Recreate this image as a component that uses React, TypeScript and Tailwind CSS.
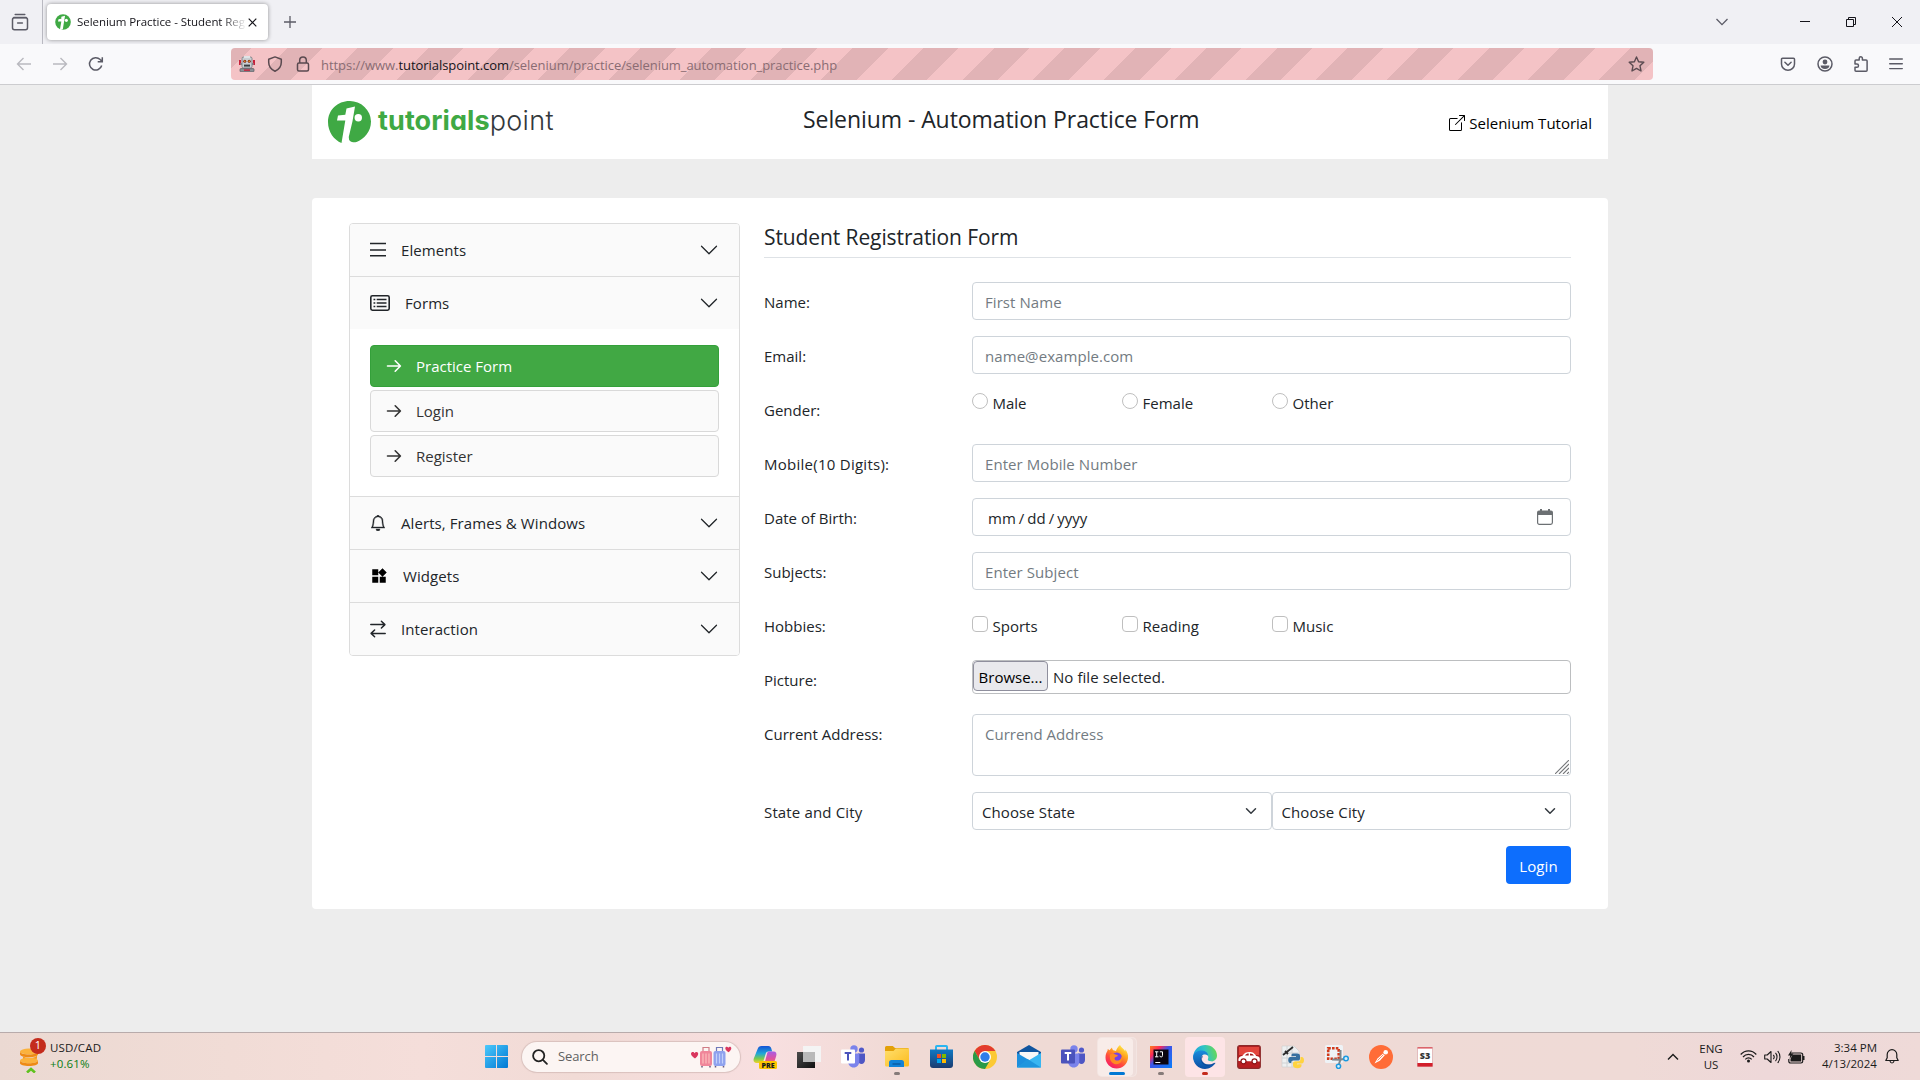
import React from 'react';
import { BsBell, BsBoxArrowUpRight, BsChevronDown } from 'react-icons/bs';
import { MdWidgets } from 'react-icons/md';

/* ---------- Browser chrome ---------- */

const TpFavicon = () => (
  <svg width="16" height="16" viewBox="0 0 43 43">
    <circle cx="21.5" cy="21.5" r="21" fill="#3fa944" />
    <path d="M17 7.500L27 5l-6 36-8 2.500L17 20H8l1.500-6 7.500-1z" fill="#fff" />
    <circle cx="30.500" cy="17" r="4.200" fill="#fff" />
  </svg>
);

const RobotIcon = () => (
  <svg width="16" height="16" viewBox="0 0 16 16">
    <rect x="0" y="4" width="2" height="5" fill="#c8203a" />
    <rect x="14" y="4" width="2" height="5" fill="#c8203a" />
    <rect x="1.5" y="7" width="13" height="2" fill="#8d9297" />
    <rect x="3" y="1" width="10" height="11" rx="1.5" fill="#c9ced2" stroke="#6d7378" strokeWidth=".8" />
    <rect x="5" y="0" width="6" height="2" fill="#dfe3e6" />
    <circle cx="5.8" cy="5.3" r="1.5" fill="#7a2318" />
    <circle cx="10.2" cy="5.3" r="1.5" fill="#7a2318" />
    <circle cx="5.8" cy="5.3" r=".8" fill="#f3a320" />
    <circle cx="10.2" cy="5.3" r=".8" fill="#f3a320" />
    <rect x="5" y="8.6" width="6" height="2" fill="#3a3d40" />
    <rect x="1" y="12.6" width="14" height="3.2" rx=".8" fill="#8b9096" stroke="#53585c" strokeWidth=".7" />
    <rect x="5" y="13.4" width="6" height="1.4" fill="#c8203a" />
  </svg>
);

function TabStrip() {
  return (
    <div className="flex h-11 items-center bg-[#f0f0f4] text-[#5b5b66]">
      <div className="flex h-11 w-[43px] items-center justify-center border-r border-[#b9b9c1] pr-[2px]">
        <svg width="18" height="18" viewBox="0 0 18 18" fill="none" stroke="currentColor" strokeWidth="1.5">
          <path d="M4.2 1.6h9.6M2.8 4.6h12.4" strokeLinecap="round" />
          <rect x="1.5" y="4.8" width="15" height="12" rx="2" />
          <path d="M6.6 9.9h4.8" strokeLinecap="round" />
        </svg>
      </div>
      <div className="ml-1 flex h-9 w-[221px] items-center rounded bg-white pl-2 shadow-[0_0_4px_rgba(0,0,0,0.4)]">
        <TpFavicon />
        <div className="ml-[6px] w-[168px] overflow-hidden text-[11.5px] tracking-[-0.06px] whitespace-nowrap text-[#15141a] [mask-image:linear-gradient(to_right,black_145px,transparent_170px)]">
          Selenium Practice - Student Registration Form
        </div>
        <svg className="ml-[3px]" width="9" height="9" viewBox="0 0 9 9" stroke="#15141a" strokeWidth="1.2">
          <path d="M.7.7l7.6 7.6M8.3.7L.7 8.3" />
        </svg>
      </div>
      <svg className="ml-[16px]" width="12" height="12" viewBox="0 0 12 12" stroke="currentColor" strokeWidth="1.3">
        <path d="M6 0v12M0 6h12" />
      </svg>
      <div className="flex-1" />
      <svg className="mr-[72px]" width="12" height="8" viewBox="0 0 12 8" fill="none" stroke="currentColor" strokeWidth="1.3">
        <path d="M.5 1L6 6.6 11.500 1" />
      </svg>
      <svg className="mr-[36px]" width="10" height="10" viewBox="0 0 10 10" stroke="#15141a">
        <path d="M0 4.500h10" />
      </svg>
      <svg className="mr-[36px]" width="10" height="10" viewBox="0 0 10 10" fill="none" stroke="#15141a">
        <path d="M.5 2.500h7v7h-7zM2.500 2.500v-2h7v7h-2" />
      </svg>
      <svg className="mr-[18px]" width="10" height="10" viewBox="0 0 10 10" stroke="#15141a">
        <path d="M0 0l10 10M10 0L0 10" />
      </svg>
    </div>
  );
}

function NavBar() {
  return (
    <div className="flex h-[41px] items-center border-b border-[#cccccf] bg-[#f9f9fb] text-[#5b5b66]">
      <svg className="ml-4 opacity-40" width="16" height="16" viewBox="0 0 16 16" fill="none" stroke="currentColor" strokeWidth="1.4">
        <path d="M7.500 2L1.500 8l6 6M1.500 8H15" />
      </svg>
      <svg className="ml-5 opacity-40" width="16" height="16" viewBox="0 0 16 16" fill="none" stroke="currentColor" strokeWidth="1.4">
        <path d="M8.500 2l6 6-6 6M14.500 8H1" />
      </svg>
      <svg className="ml-5" width="16" height="16" viewBox="0 0 16 16" fill="none" stroke="currentColor" strokeWidth="1.500">
        <path d="M13.700 9.500A6.200 6.200 0 1 1 12.200 3.600L14 5.400M14.300 1.200v4.600H9.700" />
      </svg>
      <div className="ml-[127px] flex h-8 w-[1422px] items-center rounded bg-[repeating-linear-gradient(135deg,#e1b3b6_0px,#e1b3b6_14.7px,#f4c3c6_14.7px,#f4c3c6_39.7px,#e1b3b6_39.7px,#e1b3b6_50px)] pl-2 text-[#5a4a50]">
        <RobotIcon />
        <svg className="ml-3" width="16" height="16" viewBox="0 0 16 16" fill="none" stroke="currentColor" strokeWidth="1.500" strokeLinejoin="round">
          <path d="M8 .9l6.300 2.300v3c0 4-2.300 7.200-6.300 9-4-1.800-6.300-5-6.300-9v-3z" />
        </svg>
        <svg className="ml-3" width="16" height="16" viewBox="0 0 16 16" fill="none" stroke="currentColor" strokeWidth="1.500">
          <rect x="2.500" y="7" width="11" height="8" rx="1.500" />
          <path d="M4.700 7V4.300a3.300 3.300 0 0 1 6.600 0V7" />
        </svg>
        <div className="ml-[10px] flex-1 pt-1 text-[13px] tracking-[-0.05px] whitespace-nowrap text-[#8a6c73]">
          https://www.<span className="text-[#15141a]">tutorialspoint.com</span>/selenium/practice/selenium_automation_practice.php
        </div>
        <svg className="mr-2" width="17" height="17" viewBox="0 0 17 17" fill="none" stroke="currentColor" strokeWidth="1.400" strokeLinejoin="round">
          <path d="M8.500 1l2.100 4.700 5.200.6-3.800 3.500 1 5.200-4.500-2.600L4 15l1-5.200L1.200 6.300l5.200-.6z" />
        </svg>
      </div>
      <svg className="ml-[127px]" width="16" height="16" viewBox="0 0 16 16" fill="none" stroke="currentColor" strokeWidth="1.500" strokeLinecap="round" strokeLinejoin="round">
        <path d="M2.500 2.200h11a1 1 0 0 1 1 1V8a6.500 6.200 0 0 1-13 0V3.200a1 1 0 0 1 1-1zM4.900 6.300L8 9.300l3.100-3" />
      </svg>
      <svg className="ml-[20.5px]" width="16" height="16" viewBox="0 0 16 16">
        <circle cx="8" cy="8" r="7" fill="none" stroke="currentColor" strokeWidth="1.500" />
        <circle cx="8" cy="6" r="2.400" fill="currentColor" />
        <path d="M3.600 9.600h8.800c0 2-1.800 3.400-4.400 3.400s-4.400-1.400-4.400-3.400z" fill="currentColor" />
      </svg>
      <svg className="ml-[20px]" width="16" height="16" viewBox="0 0 16 16" fill="none" stroke="currentColor" strokeWidth="1.500" strokeLinejoin="round">
        <path d="M6.200 4V2.400a1.600 1.600 0 0 1 3.200 0V4h3.700a1 1 0 0 1 1 1v9.200a1 1 0 0 1-1 1H3a1 1 0 0 1-1-1v-2.900h1.900a1.500 1.500 0 0 0 0-3.200H2V5a1 1 0 0 1 1-1z" />
      </svg>
      <svg className="ml-[20.5px]" width="14" height="12" viewBox="0 0 14 12" stroke="currentColor" strokeWidth="1.400" strokeLinecap="round">
        <path d="M.7 1h12.600M.7 5.800h12.600M.7 10.600h12.600" />
      </svg>
    </div>
  );
}

/* ---------- Page header ---------- */

function Header() {
  return (
    <header className="mx-auto grid h-[74px] w-[1296px] grid-cols-[475px_auto_1fr] bg-white px-4">
      <div className="flex items-start pt-4">
        <svg width="43" height="42" viewBox="0 0 43 42">
          <path d="M21.500 0A21.300 21 0 0 1 43 20.500C43 31 36 38 28.500 41c-4 1-8.500-.5-7.500-5l-7.500 6C6 39 0 31 0 21 0 9 9.500 0 21.500 0z" fill="#3fa944" />
          <path d="M18.500 7.500L27 5.600l-2.500 14.600L20.500 37l-.5 3.500-6.500 1.500L17.300 19.500H9l1-4.900 7.300-.8z" fill="#fff" />
          <circle cx="30.300" cy="16.800" r="3.700" fill="#fff" />
        </svg>
        <div className="mt-[3px] ml-[7px] font-['Inter'] text-[27px] leading-[34px] [font-feature-settings:'cv11']">
          <span className="font-bold tracking-[0.1px] text-[#3fa944]">tutorials</span>
          <span className="font-light tracking-[0.3px] text-[#33383c]">point</span>
        </div>
      </div>
      <h1 className="mt-[18px] text-[23px] leading-8 tracking-[-0.07px] text-[#212529]">
        Selenium - Automation Practice Form
      </h1>
      <a className="mt-[26px] flex h-6 items-center gap-1 justify-self-end text-[15px] text-black">
        <BsBoxArrowUpRight size={16} />
        Selenium Tutorial
      </a>
    </header>
  );
}

/* ---------- Sidebar ---------- */

const ListBars = () => (
  <svg width="16" height="16" viewBox="0 0 16 16" stroke="#212529" strokeWidth="1.600">
    <path d="M0 1.500h16M0 8h16M0 13.800h16" />
  </svg>
);

const FormIcon = () => (
  <svg width="20" height="16" viewBox="0 0 20 16" fill="none" stroke="#212529">
    <rect x=".8" y=".8" width="18.400" height="14.400" rx="1.600" strokeWidth="1.600" />
    <path d="M6.700 4.500h9.800M6.700 8h9.800M6.700 11.500h9.800" strokeWidth="1.500" />
    <path d="M3.500 4.500h1.800M3.500 8h1.800M3.500 11.500h1.800" strokeWidth="1.600" />
  </svg>
);

const SwapIcon = () => (
  <svg width="16" height="18" viewBox="0 0 16 18" fill="none" stroke="#212529" strokeWidth="1.500" strokeLinecap="round" strokeLinejoin="round">
    <path d="M.8 4.600h14M11.400 1.200l3.500 3.400-3.500 3.400M15.200 13.400H1.200M4.600 10L1.100 13.400l3.500 3.400" />
  </svg>
);

const LinkArrow = () => (
  <svg width="16" height="14" viewBox="0 0 16 14" fill="none" stroke="currentColor" strokeWidth="1.600" strokeLinecap="round" strokeLinejoin="round">
    <path d="M1.500 7h12.800M9.200 1.800L14.400 7l-5.200 5.200" />
  </svg>
);

function AccordionHeader({ icon, label }: { icon: React.ReactNode; label: string }) {
  return (
    <div className="box-content flex h-[52px] items-center gap-[15px] bg-[#fafafa] px-5">
      {icon}
      <span className="flex-1 tracking-[0.08px]">{label}</span>
      <BsChevronDown size={20} />
    </div>
  );
}

function SubLink({ label, active }: { label: string; active?: boolean }) {
  return (
    <div
      className={
        active
          ? 'flex h-[42px] items-center gap-[14px] rounded border border-[#34a03a] bg-[#41a844] pl-[15px] text-white'
          : 'flex h-[42px] items-center gap-[14px] rounded border border-[#d9d9d9] bg-[#fafafa] pl-[15px] text-[#333]'
      }
    >
      <LinkArrow />
      <span>{label}</span>
    </div>
  );
}

function Sidebar() {
  return (
    <nav className="w-[391px] divide-y divide-[#dcdcdc] self-start overflow-hidden rounded border border-[#dcdcdc]">
      <AccordionHeader icon={<ListBars />} label="Elements" />
      <div>
        <AccordionHeader icon={<FormIcon />} label="Forms" />
        <div className="flex h-[167px] flex-col gap-[3px] px-5 pt-4">
          <SubLink label="Practice Form" active />
          <SubLink label="Login" />
          <SubLink label="Register" />
        </div>
      </div>
      <AccordionHeader icon={<BsBell size={16} strokeWidth={0.4} />} label="Alerts, Frames & Windows" />
      <AccordionHeader icon={<MdWidgets size={18} color="#000" />} label="Widgets" />
      <AccordionHeader icon={<SwapIcon />} label="Interaction" />
    </nav>
  );
}

/* ---------- Form ---------- */

function Row({ label, children }: { label: React.ReactNode; children: React.ReactNode }) {
  return (
    <div className="grid min-h-[38px] grid-cols-[208px_599px] items-start">
      <label className="pt-2 leading-6">{label}</label>
      {children}
    </div>
  );
}

function TextInput({ placeholder }: { placeholder: string }) {
  return (
    <input
      placeholder={placeholder}
      className="h-[38px] rounded border border-[#ced4da] bg-white px-3 pt-[2px] tracking-[0.07px] placeholder:text-[#737b82] placeholder:opacity-100"
    />
  );
}

function Choice({ type, label }: { type: 'radio' | 'checkbox'; label: string }) {
  return (
    <label className="flex w-[150px] gap-[4.5px] leading-6">
      <input
        type={type}
        className={
          type === 'radio'
            ? 'h-4 w-4 appearance-none rounded-full border border-[#bfbfbf]'
            : 'h-4 w-4 appearance-none rounded border border-[#bfbfbf]'
        }
      />
      <span className="-mt-[2px]">{label}</span>
    </label>
  );
}

function Select({ label }: { label: string }) {
  return (
    <div className="relative h-[38px] flex-1">
      <select className="h-full w-full appearance-none rounded border border-[#ced4da] bg-white pt-[2px] pl-[9px] tracking-[0.1px]">
        <option>{label}</option>
      </select>
      <svg className="absolute top-[13px] right-[13px]" width="16" height="12" viewBox="0 0 16 16" fill="none" stroke="#343a40" strokeWidth="2" strokeLinecap="round" strokeLinejoin="round">
        <path d="M2 5l6 6 6-6" />
      </svg>
    </div>
  );
}

function RegistrationForm() {
  return (
    <section className="w-[807px]">
      <h2 className="h-[35px] border-b border-[#dee2e6] text-[21px] leading-[28px] tracking-[-0.1px]">
        Student Registration Form
      </h2>
      <form className="mt-6 flex flex-col gap-4">
        <Row label="Name:">
          <TextInput placeholder="First Name" />
        </Row>
        <Row label="Email:">
          <TextInput placeholder="name@example.com" />
        </Row>
        <Row label="Gender:">
          <div className="flex pt-[3px]">
            <Choice type="radio" label="Male" />
            <Choice type="radio" label="Female" />
            <Choice type="radio" label="Other" />
          </div>
        </Row>
        <Row label={<span className="tracking-[0.26px]">Mobile(10 Digits):</span>}>
          <TextInput placeholder="Enter Mobile Number" />
        </Row>
        <Row label="Date of Birth:">
          <div className="flex h-[38px] items-center rounded border border-[#ced4da] pr-[17px] pl-[15px]">
            <div className="flex flex-1 gap-[3px] pt-[2px]">
              <span>mm</span>
              <span>/</span>
              <span>dd</span>
              <span>/</span>
              <span>yyyy</span>
            </div>
            <svg width="16" height="16" viewBox="0 0 16 16" fill="none">
              <path d="M3 0h2v1.500h6V0h2v1.500h1a2 2 0 0 1 2 2V6H0V3.500a2 2 0 0 1 2-2h1z" fill="#6c7073" />
              <path d="M.6 5v8.600a1.800 1.800 0 0 0 1.800 1.800h11.200a1.800 1.800 0 0 0 1.800-1.800V5" stroke="#6c7073" strokeWidth="1.200" />
            </svg>
          </div>
        </Row>
        <Row label="Subjects:">
          <TextInput placeholder="Enter Subject" />
        </Row>
        <Row label="Hobbies:">
          <div className="flex pt-[10px]">
            <Choice type="checkbox" label="Sports" />
            <Choice type="checkbox" label="Reading" />
            <Choice type="checkbox" label="Music" />
          </div>
        </Row>
        <Row label="Picture:">
          <div className="flex h-[34px] rounded border border-[#bcbec0]">
            <button type="button" className="h-[30px] w-[75px] rounded border border-[#8f8f9d] bg-[#e9e9ed] pt-[2px] text-black">
              Browse...
            </button>
            <span className="ml-[5px] pt-[5px] tracking-[0.06px]">No file selected.</span>
          </div>
        </Row>
        <Row label="Current Address:">
          <div className="relative h-[62px]">
            <textarea
              placeholder="Currend Address"
              className="block h-[62px] w-full resize-none rounded border border-[#ced4da] px-3 pt-[7px] leading-[24px] placeholder:text-[#737b82] placeholder:opacity-100"
            />
            <svg className="absolute right-[2px] bottom-[2px]" width="14" height="14" viewBox="0 0 14 14" stroke="#75777a" strokeWidth="1.100">
              <path d="M0 14L14 0M4 14L14 4M8 14l6-6M12 14l2-2" />
            </svg>
          </div>
        </Row>
        <Row label={<span className="tracking-[0.15px]">State and City</span>}>
          <div className="flex">
            <Select label="Choose State" />
            <Select label="Choose City" />
          </div>
        </Row>
        <button type="button" className="h-[38px] w-[65px] self-end rounded bg-[#0d6efd] pt-[2px] tracking-[0.1px] text-white">
          Login
        </button>
      </form>
    </section>
  );
}

/* ---------- Taskbar icons ---------- */

const StartIcon = () => (
  <svg width="23" height="23" viewBox="0 0 23 23">
    <defs>
      <linearGradient id="win" gradientUnits="userSpaceOnUse" x1="0" y1="0" x2="23" y2="23">
        <stop offset="0" stopColor="#4cc9fb" />
        <stop offset="1" stopColor="#0078d4" />
      </linearGradient>
    </defs>
    <path d="M0 1a1 1 0 0 1 1-1h10v11H0zM12 0h10a1 1 0 0 1 1 1v10H12zM0 12h11v11H1a1 1 0 0 1-1-1zM12 12h11v10a1 1 0 0 1-1 1H12z" fill="url(#win)" />
  </svg>
);

const SuitcasesIcon = () => (
  <svg width="41" height="22" viewBox="0 0 41 22">
    <path d="M4 12.500C1.500 10.800 0 9.400 0 7.800c0-2.200 2.800-2.600 3.600-.6.900-2 3.900-1.600 3.600.8C7 9.800 5.500 11.400 4 12.500z" fill="#d9365e" />
    <path d="M37.500 6.200C35.500 5 34.300 3.700 34.300 2.300c0-1.900 2.300-2 3-.5.700-1.500 3.200-1.300 3 .6-.1 1.400-1.500 2.900-2.800 3.800z" fill="#d9365e" />
    <path d="M12 6V1.500h6V6" fill="none" stroke="#cf7c86" strokeWidth="1.200" />
    <path d="M25.500 6V1.500h6V6" fill="none" stroke="#6f78b8" strokeWidth="1.200" />
    <rect x="9" y="5" width="12" height="15" rx="2" fill="#f0869a" />
    <rect x="22.500" y="5" width="12" height="15" rx="2" fill="#8fa2ee" />
    <path d="M12 7.500v10M15 7.500v10M18 7.500v10" stroke="#fcbfbd" strokeWidth="1.200" />
    <path d="M25.500 7.500v10M28.500 7.500v10M31.500 7.500v10" stroke="#c3d0fb" strokeWidth="1.200" />
    <path d="M11 20v1.500M19 20v1.500M24.500 20v1.500M32.500 20v1.500" stroke="#6b5c7c" strokeWidth="1.500" />
  </svg>
);

const CopilotIcon = () => (
  <svg width="24" height="24" viewBox="0 0 24 24">
    <defs>
      <linearGradient id="cpA" x1="0" y1="0" x2="0" y2="1">
        <stop offset="0" stopColor="#1553d6" />
        <stop offset=".45" stopColor="#21a7d8" />
        <stop offset=".75" stopColor="#7ccb4c" />
        <stop offset="1" stopColor="#f1d22c" />
      </linearGradient>
      <linearGradient id="cpB" x1="0" y1="0" x2="0" y2="1">
        <stop offset="0" stopColor="#a85be6" />
        <stop offset=".5" stopColor="#e0529c" />
        <stop offset="1" stopColor="#f78b45" />
      </linearGradient>
    </defs>
    <path d="M8.500 1h6.800c1.700 0 2.600 1.200 3 2.500l.9 3h-3.600c-1.600 0-2.400.7-2.900 2.200l-2.200 7C10 17.500 9 18 7.600 18H3.500C1 18 0 16 .8 13.500l3.700-9.300C5.300 2 6.500 1 8.500 1z" fill="url(#cpA)" />
    <path d="M15.600 6.500h4.900c2.600 0 3.500 2 2.700 4.500L21 18c-.8 2-2 3-4 3H9c1.300 0 2-1 2.500-2.500L14 9c.4-1.600.7-2.500 1.600-2.500z" fill="url(#cpB)" />
    <rect x="6" y="16" width="18" height="8" rx="1.500" fill="#fdc500" />
    <text x="15" y="22.600" fontSize="7" fontWeight="800" textAnchor="middle" fill="#1b1b1b">PRE</text>
  </svg>
);

const TaskViewIcon = () => (
  <svg width="24" height="22" viewBox="0 0 24 22">
    <defs>
      <linearGradient id="tvB" x1="0" y1="0" x2="1" y2="1">
        <stop offset="0" stopColor="#4b4b4b" />
        <stop offset="1" stopColor="#111" />
      </linearGradient>
    </defs>
    <rect x="0" y="6" width="18" height="16" fill="url(#tvB)" />
    <rect x="6" y="0" width="18" height="16" fill="#f4f4f4" />
    <rect x="6" y="6" width="12" height="10" fill="#b9b9b9" />
  </svg>
);

const TeamsIcon = ({ light }: { light?: boolean }) => (
  <svg width="24" height="23" viewBox="0 0 24 23">
    <circle cx="20.500" cy="5" r="2.600" fill="#5059c9" />
    <circle cx="13" cy="4" r="3.700" fill="#7b83eb" />
    <path d="M17 8.500h7V15c0 2.300-1.500 4-3.500 4S17 17.500 17 15z" fill="#4e56c4" />
    <path d="M7 8.500h11.300V16c0 4-2.300 6.500-5.600 6.500S7 20 7 16z" fill="#7b83eb" />
    <rect x="0" y="4.500" width="14" height="14" rx="1" fill={light ? '#ffffff' : '#4b53bc'} />
    <path d="M3.700 8h6.600M7 8v7.500" stroke={light ? '#4b53bc' : '#ffffff'} strokeWidth="2" />
  </svg>
);

const ExplorerIcon = () => (
  <svg width="24" height="21" viewBox="0 0 24 21">
    <defs>
      <linearGradient id="fe" x1="0" y1="0" x2="1" y2="1">
        <stop offset="0" stopColor="#ffdf6e" />
        <stop offset="1" stopColor="#fcbb1c" />
      </linearGradient>
    </defs>
    <path d="M0 1.500A1.500 1.500 0 0 1 1.500 0h6.300L10 2h12.500A1.500 1.500 0 0 1 24 3.500V10H0z" fill="#e3a008" />
    <path d="M0 5h8.500l2.300-2.500H24V19a1.500 1.500 0 0 1-1.500 1.500h-21A1.500 1.500 0 0 1 0 19z" fill="url(#fe)" />
    <path d="M4 21v-4.500A2.500 2.500 0 0 1 6.500 14h10a2.500 2.500 0 0 1 2.500 2.500V21z" fill="#1283d8" />
    <path d="M7.500 18h8" stroke="#0b5da5" strokeWidth="1.500" />
  </svg>
);

const StoreIcon = () => (
  <svg width="23" height="23" viewBox="0 0 23 23">
    <defs>
      <linearGradient id="st" x1="0" y1="0" x2="0" y2="1">
        <stop offset="0" stopColor="#1079c4" />
        <stop offset="1" stopColor="#1b3b6f" />
      </linearGradient>
    </defs>
    <path d="M6 6V1.800A.8.800 0 0 1 6.800 1h9.400a.8.800 0 0 1 .8.800V6" fill="none" stroke="#2bb5f0" strokeWidth="2" />
    <path d="M0 4.500h23V20a3 3 0 0 1-3 3H3a3 3 0 0 1-3-3z" fill="url(#st)" />
    <rect x="7" y="9" width="4" height="4" fill="#f25022" />
    <rect x="12" y="9" width="4" height="4" fill="#7fba00" />
    <rect x="7" y="14" width="4" height="4" fill="#00a4ef" />
    <rect x="12" y="14" width="4" height="4" fill="#ffb900" />
  </svg>
);

const ChromeIcon = () => (
  <svg width="24" height="24" viewBox="0 0 24 24">
    <circle cx="12" cy="12" r="12" fill="#fcc934" />
    <path d="M12 6h10.400A12 12 0 0 0 1.600 6L6.800 15z" fill="#e33b2e" />
    <path d="M1.600 6A12 12 0 0 0 12 24l5.200-9L12 18l-5.200-3z" fill="#2a9a48" />
    <circle cx="12" cy="12" r="6" fill="#fff" />
    <circle cx="12" cy="12" r="4.700" fill="#2f7de9" />
  </svg>
);

const MailIcon = () => (
  <svg width="24" height="23" viewBox="0 0 24 23">
    <path d="M12 0l12 7v5H0V7z" fill="#10559f" />
    <path d="M2.500 7h19v6L12 19l-9.500-6z" fill="#f7f7f7" />
    <path d="M0 8l12 7L0 22.500z" fill="#1c8fdd" />
    <path d="M24 8v14.500H0z" fill="#38b6f2" />
    <path d="M0 22.500L10.500 14 24 22.500z" fill="#1e96de" />
  </svg>
);

const FirefoxIcon = () => (
  <svg width="24" height="24" viewBox="0 0 24 24">
    <defs>
      <linearGradient id="ff" x1=".8" y1="0" x2=".2" y2="1">
        <stop offset="0" stopColor="#fff24a" />
        <stop offset=".35" stopColor="#ffa11f" />
        <stop offset=".65" stopColor="#ff4a3d" />
        <stop offset="1" stopColor="#f4156e" />
      </linearGradient>
    </defs>
    <path d="M15 0c1 2.500 4.200 4 5.300 6.500.1-.9 0-1.700-.2-2.300C22 6.500 23.500 9.500 23 13c-.6 6-5.300 10.500-11.300 10.500C5.300 23.500.5 18.500.5 12.500c0-3 .8-5 2-6.800L2.800 4l1.700 1.300C5.800 3.500 6.500 3 7 2.500c0 1 .4 2 1.200 2.700L11 6c.8-2.300 2-4.600 4-6z" fill="url(#ff)" />
    <circle cx="11.800" cy="12.800" r="5.200" fill="#7542e5" />
    <path d="M5 9.500c2-1.300 4-.6 5.500 0 1 .5 2.500.5 2.300 1.300-.4 1.200-2.600 1-3.200 2.200-.5 1.800 1.600 3 3.700 2.500 2-.4 3.200-2 3-4.500 2.500 4-1 8.500-5.300 8.200C7 19 4 15 5 9.500z" fill="#ff8a22" />
  </svg>
);

const IntellijIcon = () => (
  <svg width="22" height="22" viewBox="0 0 22 22">
    <defs>
      <linearGradient id="ij" x1="0" y1="0" x2="1" y2="1">
        <stop offset="0" stopColor="#fc801d" />
        <stop offset=".25" stopColor="#fe2857" />
        <stop offset=".45" stopColor="#3d55e8" />
        <stop offset="1" stopColor="#087cfa" />
      </linearGradient>
    </defs>
    <rect width="22" height="22" fill="url(#ij)" />
    <rect x="3.500" y="3.500" width="15" height="15" fill="#0b0510" />
    <path d="M5 5.800h3.400M6.700 5.800v5M5 10.800h3.400M9.800 5.800h2.700v3.700a1.300 1.300 0 0 1-2.700.2M5.300 16.500h5" stroke="#fff" strokeWidth="1" fill="none" />
  </svg>
);

const EdgeIcon = () => (
  <svg width="24" height="24" viewBox="0 0 24 24">
    <defs>
      <linearGradient id="egA" x1="0" y1=".5" x2="1" y2=".3">
        <stop offset="0" stopColor="#1f9fe0" />
        <stop offset=".5" stopColor="#31c4c5" />
        <stop offset="1" stopColor="#6bd94e" />
      </linearGradient>
      <linearGradient id="egB" x1="0" y1="0" x2="0" y2="1">
        <stop offset="0" stopColor="#1b8bdc" />
        <stop offset="1" stopColor="#0c4da2" />
      </linearGradient>
    </defs>
    <path d="M.2 11C1 4.500 6 0 12.200 0 19 0 24 5 24 10.500c0 3.500-2.500 6-6 6-2.600 0-4-1-3.300-2.300 1.500-2 .4-5-3.500-5C6 9.200 2 11 .2 15z" fill="url(#egA)" />
    <path d="M.2 11C1.200 7.500 5 5.500 9 5.600c4 .2 6 3 6 5-4-3.500-8 .2-6.500 4.500 1.500 4.200 7.500 6 13 2.900.8-.4 1 .1.700.6C20 21.500 16.500 24 12 24 5 24-.5 18 .2 11z" fill="url(#egB)" />
    <path d="M9.500 11c-1.400 1.700-1.600 4-.6 5.700 2 4 7.600 4.700 12.600 1.500" fill="none" stroke="#0a3f8c" strokeWidth="1.200" opacity=".6" />
    <path d="M10.800 11.500c1-1.300 3.200-1.300 4 .3.600 1.300-.6 2.200-.1 3.200.7 1.200 3 1.500 4.800 1.300-3.500 1.900-7.300 1.200-8.500-1-.7-1.300-.8-2.800-.2-3.800z" fill="#fde4e8" />
  </svg>
);

const CarIcon = () => (
  <svg width="24" height="24" viewBox="0 0 24 24">
    <rect x=".7" y=".7" width="22.600" height="22.600" rx="2" fill="#b81d20" stroke="#8c2a2a" strokeWidth="1.200" />
    <rect x="2" y="2" width="20" height="8" fill="#e2453d" />
    <path d="M1.500 16c-.5-3 .8-4.500 4-5.200C7.500 8 9 7 12.500 7c3.700 0 5 1.500 6.700 4 3.500.3 4 2 3.500 5.500z" fill="#fff" />
    <path d="M8 10.600c1-1.500 2-2 3.700-2v2zM13 8.600c2 0 3 .7 4 2h-4z" fill="#a01a1d" />
    <circle cx="6.500" cy="16.300" r="2.500" fill="#fff" stroke="#8c1518" strokeWidth="1.200" />
    <circle cx="17.500" cy="16.300" r="2.500" fill="#fff" stroke="#8c1518" strokeWidth="1.200" />
  </svg>
);

const PythonIcon = () => (
  <svg width="24" height="24" viewBox="0 0 24 24">
    <path d="M1 1h12l5 5v16H1z" fill="#eef0f1" stroke="#c9cccd" strokeWidth=".6" />
    <path d="M1 8h16M1 13h16M1 18h16M6 1v21M11 1v21" stroke="#cfd2d4" />
    <path d="M2 10L12 2M4 6l3 3" stroke="#2b2b2b" strokeWidth="1.800" />
    <path d="M12.500 8.500h3.500c2 0 3 .8 3 2.600v2.400c0 1.500-1 2-2.500 2h-4c-1.500 0-2.300.8-2.300 2.500h-1c-1.500 0-2-1.500-2-3s.6-3 2.200-3H15v-.8h-4.500v-1c0-1.200.7-1.700 2-1.700z" fill="#356f9f" />
    <path d="M19.500 12h1.300c1.500 0 2.200 1.500 2.200 3.200S22.300 18.500 20.800 18.500H16v.7h4.500v1.300c0 2-1.500 2.700-4 2.700S12 22.500 12 20.500v-2c0-1.500 1-2.200 2.400-2.200h3c1.400 0 2.100-.8 2.100-2.300z" fill="#ffd340" />
  </svg>
);

const SnipIcon = () => (
  <svg width="24" height="24" viewBox="0 0 24 24">
    <rect width="18" height="18" rx="1.500" fill="#eef3f7" />
    <rect x="3.200" y="3.200" width="10.500" height="10.500" fill="none" stroke="#d2391a" strokeWidth="2.600" strokeDasharray="2.600 1.200" />
    <path d="M15.500 5v9l-1.500 5M7 14.500l8.500.3 5-1.300" stroke="#7f868c" strokeWidth="2" fill="none" />
    <circle cx="21" cy="13.500" r="2.300" fill="#d8effb" stroke="#1b9ae0" strokeWidth="1.500" />
    <circle cx="13.500" cy="21.300" r="2.100" fill="#d8effb" stroke="#1b9ae0" strokeWidth="1.500" />
  </svg>
);

const PostmanIcon = () => (
  <svg width="24" height="24" viewBox="0 0 24 24">
    <circle cx="12" cy="12" r="12" fill="#ff6c37" />
    <path d="M5.500 18.500l3-5 5.500-5 1.800 1.800-5 5.500z" fill="#fff" />
    <circle cx="16.700" cy="7.300" r="2.300" fill="#fff" />
    <path d="M8.500 15.500l6-6" stroke="#ff6c37" strokeWidth=".8" />
  </svg>
);

const S3Icon = () => (
  <svg width="16" height="20" viewBox="0 0 16 20">
    <rect x=".4" y=".4" width="15.200" height="19.200" rx="1" fill="#fff" stroke="#d9a7a9" strokeWidth=".8" />
    <rect x=".5" y=".3" width="15" height="1.200" fill="#d8404a" />
    <rect x=".4" y="16" width="15.200" height="3.600" fill="#d21f2b" />
    <text x="8" y="11.700" fontSize="9" fontWeight="800" textAnchor="middle" fill="#333">S3</text>
  </svg>
);

/* ---------- Taskbar ---------- */

function AppCell({ children, mark }: { children: React.ReactNode; mark?: string }) {
  return (
    <div className="relative flex h-full w-11 items-center justify-center">
      {children}
      {mark && <span className={`absolute bottom-[5px] h-[3px] rounded-full ${mark}`} />}
    </div>
  );
}

function Taskbar() {
  return (
    <footer className="flex h-12 items-center border-t border-[#b8abab] bg-[linear-gradient(90deg,#ebd9d2_0%,#f1dcd6_12%,#f5deda_22%,#f1dbd6_30%,#f8dfe0_40%,#f0dad5_47%,#efdad5_55%,#efdad6_85%,#eed8d9_92%,#efdad8_100%)] text-[11.5px] text-[#1b1b1b]">
      <div className="flex w-[484px] items-center">
        <div className="relative ml-5 h-8 w-[30px]">
          <svg width="26" height="32" viewBox="0 0 26 32">
            <ellipse cx="9" cy="10.500" rx="9" ry="3" fill="#fbb23c" />
            <path d="M0 10.500v2.800c0 1.700 4 3 9 3s9-1.300 9-3v-2.800c0 1.700-4 3-9 3s-9-1.300-9-3z" fill="#ee8a14" />
            <path d="M3 15.200c1.500 1 3.700 1.700 6.500 1.700 4 0 7-1.200 7.500-2.700v3c-.5 1.500-3.500 2.700-7.500 2.700-3.500 0-6-1-6.500-2z" fill="#f79a1c" />
            <ellipse cx="9" cy="19.500" rx="9" ry="2.800" fill="#fbb23c" />
            <path d="M0 19.500v2.700c0 1.600 4 2.800 9 2.800s9-1.200 9-2.800v-2.700c0 1.600-4 2.800-9 2.800s-9-1.200-9-2.800z" fill="#ee8a14" />
            <path d="M7 31.500l4-3.500 4 3.500" fill="none" stroke="#5fc21e" strokeWidth="2.600" />
          </svg>
          <span className="absolute -top-[3px] left-[10px] flex h-4 w-4 items-center justify-center rounded-full bg-[#c42b1c] text-[11px] text-white">
            1
          </span>
        </div>
        <div className="-mt-[2px] leading-4 tracking-[0.15px]">
          <div>USD/CAD</div>
          <div className="text-[#0a7d12]">+0.61%</div>
        </div>
      </div>
      <div className="ml-px flex items-center">
        <StartIcon />
        <div className="ml-[14px] flex h-[30px] w-[218px] items-center rounded-full bg-[#fcf5f3] pr-2 pl-[10px] shadow-[0_0_1px_1px_rgba(200,175,172,0.6)]">
          <svg width="16" height="16" viewBox="0 0 16 16" fill="none" stroke="#222" strokeWidth="1.800" strokeLinecap="round">
            <circle cx="6.700" cy="6.700" r="5.600" />
            <path d="M10.900 10.900l4 4" />
          </svg>
          <span className="ml-[10px] flex-1 text-[13px] tracking-[-0.1px] text-[#616161]">Search</span>
          <SuitcasesIcon />
        </div>
      </div>
      <div className="ml-[3px] flex h-full items-center">
        <AppCell><CopilotIcon /></AppCell>
        <AppCell><TaskViewIcon /></AppCell>
        <AppCell><TeamsIcon light /></AppCell>
        <AppCell mark="w-[6px] bg-[#857b79]"><ExplorerIcon /></AppCell>
        <AppCell><StoreIcon /></AppCell>
        <AppCell><ChromeIcon /></AppCell>
        <AppCell><MailIcon /></AppCell>
        <AppCell><TeamsIcon /></AppCell>
        <AppCell mark="w-4 bg-[#0078d4]">
          <div className="flex h-[38px] w-[38px] items-center justify-center rounded bg-[#f8ece9] pr-px shadow-[inset_-3px_0_0_#efdedb,0_0_0_1px_#f3e5e2]">
            <FirefoxIcon />
          </div>
        </AppCell>
        <AppCell mark="w-[6px] bg-[#857b79]"><IntellijIcon /></AppCell>
        <AppCell mark="w-[6px] bg-[#c42b1c]">
          <div className="flex h-10 w-10 items-center justify-center rounded bg-[#fde4e6]">
            <EdgeIcon />
          </div>
        </AppCell>
        <AppCell><CarIcon /></AppCell>
        <AppCell><PythonIcon /></AppCell>
        <AppCell><SnipIcon /></AppCell>
        <AppCell><PostmanIcon /></AppCell>
        <AppCell><S3Icon /></AppCell>
      </div>
      <div className="flex-1" />
      <svg width="12" height="8" viewBox="0 0 12 8" fill="none" stroke="#1b1b1b" strokeWidth="1.400">
        <path d="M1 6.500l5-5 5 5" />
      </svg>
      <div className="ml-[19px] w-[26px] text-center leading-4">
        <div>ENG</div>
        <div>US</div>
      </div>
      <svg className="ml-[16px]" width="17" height="13" viewBox="0 0 17 13" fill="none" stroke="#1b1b1b" strokeWidth="1.200">
        <path d="M.7 4.500C5-.4 12-.4 16.300 4.500M3 7c3-3.500 8-3.500 11 0M5.300 9.300c1.800-2 4.600-2 6.400 0" />
        <circle cx="8.500" cy="11" r="1.500" fill="#1b1b1b" stroke="none" />
      </svg>
      <svg className="ml-[7px]" width="17" height="14" viewBox="0 0 17 14" fill="none" stroke="#1b1b1b" strokeWidth="1.100" strokeLinejoin="round">
        <path d="M.7 5v4h2.500L7 12.500v-11L3.200 5zM9.300 4.800c1 1.200 1 3.200 0 4.400M11.500 2.900c2 2.200 2 6 0 8.200M13.700 1c3 3.400 3 8.600 0 12" />
      </svg>
      <svg className="ml-[7px]" width="17" height="14" viewBox="0 0 17 14">
        <path d="M3.500 3H13a1.700 1.700 0 0 1 1.700 1.700v6.600A1.700 1.700 0 0 1 13 13H2.500A1.700 1.700 0 0 1 .8 11.300V9" fill="none" stroke="#1b1b1b" strokeWidth="1.200" />
        <path d="M4.500 4.500h8.700v7H2.500V9z" fill="#1b1b1b" />
        <path d="M15 6h1.500v4H15z" fill="#1b1b1b" />
        <path d="M3.500 0L0 5.500h2.200L1.500 9l4-5.500H3.300z" fill="#1b1b1b" />
      </svg>
      <div className="-mt-[1px] ml-3 w-[60px] text-right leading-4">
        <div>3:34 PM</div>
        <div className="tracking-[0.06px]">4/13/2024</div>
      </div>
      <svg className="mr-[21px] ml-2" width="14" height="15" viewBox="0 0 14 15" fill="none" stroke="#1b1b1b" strokeWidth="1.200" strokeLinejoin="round">
        <path d="M.8 11.500l1.400-2.700V5.500a4.800 4.800 0 0 1 9.600 0v3.300l1.400 2.700zM5 12c.3 1.500 1 2 2 2s1.700-.5 2-2" />
      </svg>
    </footer>
  );
}

export default function App() {
  return (
    <div className="flex h-[1080px] w-[1920px] flex-col overflow-hidden bg-[#ededed] font-['Open_Sans',sans-serif] text-[15px] text-[#212529]">
      <TabStrip />
      <NavBar />
      <main className="flex-1">
        <Header />
        <div className="mx-auto mt-[39px] flex h-[711px] w-[1296px] justify-between rounded bg-white pt-[25px] pr-[37px] pl-[37px]">
          <Sidebar />
          <RegistrationForm />
        </div>
      </main>
      <Taskbar />
    </div>
  );
}
